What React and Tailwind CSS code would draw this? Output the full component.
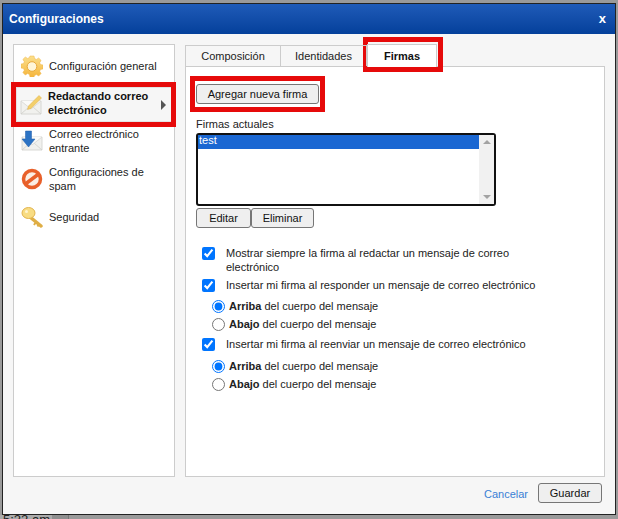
function GearIcon() {
  return (
    <svg width="22" height="22" viewBox="0 0 22 22">
      <defs>
        <linearGradient id="gear" x1="0" y1="0" x2="0" y2="1">
          <stop offset="0" stopColor="#fbe08c" />
          <stop offset="1" stopColor="#f5b53c" />
        </linearGradient>
      </defs>
      <path
        d="M9 1h4l.6 2.6 1.8.8L17.700 3l2.400 2.400-1.400 2.300.8 1.800 2.500.5v3.900l-2.500.6-.8 1.800 1.400 2.300-2.400 2.400-2.300-1.400-1.800.8L13 22H9l-.6-2.600-1.800-.8L4.300 20l-2.400-2.400 1.400-2.300-.8-1.800L0 13V9.100l2.500-.6.8-1.800-1.400-2.300L4.300 2l2.300 1.400 1.800-.8z"
        fill="url(#gear)"
        stroke="#eeb54a"
        strokeWidth="0.5"
      />
      <circle cx="11" cy="11.500" r="4.800" fill="#fff6d8" stroke="#e9a93a" strokeWidth="1" />
    </svg>
  );
}

function Envelope() {
  return (
    <>
      <path d="M1 7h20v13H1z" fill="#f1f1ee" stroke="#d0d0cc" strokeWidth="0.8" />
      <path d="M1 20l8-7M21 20l-8-7" stroke="#cfcfca" strokeWidth="0.8" fill="none" />
      <path d="M1 7l10 8 10-8" stroke="#d6d6d2" strokeWidth="0.8" fill="#fafaf8" />
    </>
  );
}

function PencilMailIcon() {
  return (
    <svg width="22" height="22" viewBox="0 0 22 22">
      <Envelope />
      <path d="M7.500 15.500l1-3.500L19 1.500l2.500 2.500L11 14.500z" fill="#f3cf6a" stroke="#dfae45" strokeWidth="0.5" />
    </svg>
  );
}

function InboxIcon() {
  return (
    <svg width="22" height="22" viewBox="0 0 22 22">
      <Envelope />
      <path d="M4.500 1h6v8h3.500l-6.500 8L1 9h3.500z" fill="#2c73c4" stroke="#1e5da8" strokeWidth="0.5" />
    </svg>
  );
}

function SpamIcon() {
  return (
    <svg width="22" height="22" viewBox="0 0 22 22">
      <circle cx="11" cy="11" r="8.500" fill="#fbeee4" stroke="#e8602a" strokeWidth="3.500" />
      <path d="M5 15.500L17 6.500" stroke="#e8602a" strokeWidth="3.500" />
    </svg>
  );
}

function KeyIcon() {
  return (
    <svg width="22" height="22" viewBox="0 0 22 22">
      <path d="M9 11l11 9" stroke="#dfae45" strokeWidth="3.500" strokeLinecap="round" />
      <path d="M15 16l-2 3M18 18l-1.500 2.500" stroke="#dfae45" strokeWidth="2" />
      <ellipse cx="7.500" cy="7" rx="6.500" ry="5.500" fill="#f8dc83" stroke="#e3b54e" strokeWidth="1" />
      <circle cx="5.500" cy="5.500" r="1.500" fill="#fff5cf" />
    </svg>
  );
}

function SideItem({ icon, height, active, children }) {
  return (
    <div
      className={
        active
          ? "mx-[2px] flex items-center border border-[#e2e2e2] bg-[#f6f6f6] pl-[2px] pr-[5px] font-bold text-[#111]"
          : "mx-[2px] flex items-center pl-[4px] pr-[5px] text-[#222]"
      }
      style={{ height }}
    >
      <span className="ml-[1px] flex w-[28px] shrink-0">{icon}</span>
      <span className={active ? "mb-[3px] w-[115px] leading-[14px]" : "w-[115px] leading-[14px]"}>{children}</span>
      {active && <span className="ml-auto h-0 w-0 border-y-[5px] border-l-[5px] border-y-transparent border-l-[#555]" />}
    </div>
  );
}

function Btn({ className, children }) {
  return (
    <button className={"h-[20px] rounded-[3px] border border-[#767676] bg-[#efefef] text-[#111] " + className}>
      {children}
    </button>
  );
}

function CheckRow({ className, children }) {
  return (
    <label className={"flex items-start pl-[16px] leading-[14px] " + className}>
      <input type="checkbox" defaultChecked className="mr-[11px] mt-[1px] h-[13px] w-[13px] shrink-0" />
      <span className="w-[330px]">{children}</span>
    </label>
  );
}

function RadioRow({ name, checked, bold, className }) {
  return (
    <label className={"flex h-[14px] items-center pl-[26px] leading-[14px] " + className}>
      <input type="radio" name={name} defaultChecked={checked} className="mr-[4px] h-[13px] w-[13px] shrink-0" />
      <span>
        <b>{bold}</b> del cuerpo del mensaje
      </span>
    </label>
  );
}

export default function App() {
  return (
    <div className="h-[519px] w-[618px] overflow-hidden bg-[#9a9a9a] pt-[3px] font-['Liberation_Sans',Arial,sans-serif] text-[11px] text-[#222] relative">
      {/* dialog */}
      <div className="ml-[2px] flex h-[512px] w-[614px] flex-col border border-[#222] bg-[#f6f6f6]">
        <div className="flex h-[30px] shrink-0 items-center justify-between bg-gradient-to-b from-[#1f5bb8] to-[#04409b] pl-[6px] pr-[9px] text-[12px] font-bold text-white">
          <span>Configuraciones</span>
          <span className="text-[13px]">x</span>
        </div>

        <div className="flex h-[443px] shrink-0 pl-[10px] pt-[10px]">
          {/* sidebar */}
          <div className="h-[433px] w-[162px] shrink-0 border border-[#ccc] bg-white">
            <SideItem icon={<GearIcon />} height={42}>Configuración general</SideItem>
            <SideItem icon={<PencilMailIcon />} height={35} active>Redactando correo electrónico</SideItem>
            <SideItem icon={<InboxIcon />} height={38}>Correo electrónico entrante</SideItem>
            <SideItem icon={<SpamIcon />} height={38}>Configuraciones de spam</SideItem>
            <SideItem icon={<KeyIcon />} height={38}>Seguridad</SideItem>
          </div>

          {/* settings panel */}
          <div className="ml-[10px] flex w-[420px] flex-col">
            <div className="relative z-10 flex h-[22px] shrink-0 items-end text-[11px]">
              <div className="flex h-[21px] w-[96px] items-center justify-center border border-b-0 border-[#ccc]">Composición</div>
              <div className="flex h-[21px] w-[86px] items-center justify-center border-y border-r border-b-0 border-[#ccc]">Identidades</div>
              <div className="-mb-px flex h-[23px] w-[70px] items-center justify-center border border-b-0 border-[#ccc] bg-white font-bold text-[#111]">Firmas</div>
            </div>
            <div className="h-[411px] border border-[#ccc] bg-white pt-[17px]">
              <Btn className="ml-[10px] w-[123px]">Agregar nueva firma</Btn>
              <div className="ml-[10px] mt-[13px] leading-[14px]">Firmas actuales</div>
              <div className="ml-[10px] mt-[2px] flex h-[73px] w-[300px] rounded-[3px] border-2 border-[#111] bg-white">
                <div className="h-[14px] flex-1 bg-[#1a67d2] pl-[1px] leading-[10px] text-white">test</div>
                <div className="flex w-[15px] flex-col items-center justify-between bg-[#f1f1f1] py-[5px]">
                  <span className="h-0 w-0 border-x-[4px] border-b-[4px] border-x-transparent border-b-[#a3a3a3]" />
                  <span className="h-0 w-0 border-x-[4px] border-t-[4px] border-x-transparent border-t-[#a3a3a3]" />
                </div>
              </div>
              <div className="ml-[10px] mt-[2px] flex">
                <Btn className="w-[55px]">Editar</Btn>
                <Btn className="w-[63px]">Eliminar</Btn>
              </div>
              <CheckRow className="mt-[18px]">Mostrar siempre la firma al redactar un mensaje de correo electrónico</CheckRow>
              <CheckRow className="mt-[4px]">Insertar mi firma al responder un mensaje de correo electrónico</CheckRow>
              <RadioRow name="responder" checked bold="Arriba" className="mt-[7px]" />
              <RadioRow name="responder" bold="Abajo" className="mt-[4px]" />
              <CheckRow className="mt-[6px]">Insertar mi firma al reenviar un mensaje de correo electrónico</CheckRow>
              <RadioRow name="reenviar" checked bold="Arriba" className="mt-[8px]" />
              <RadioRow name="reenviar" bold="Abajo" className="mt-[4px]" />
            </div>
          </div>
        </div>

        <div className="flex flex-1 items-start justify-end pr-[13px] pt-[6px]">
          <a className="mr-[10px] mt-[3px] text-[#3a7fd5]">Cancelar</a>
          <Btn className="w-[64px]">Guardar</Btn>
        </div>
      </div>

      {/* page behind the dialog */}
      <div className="flex h-[4px]">
        <div className="h-full w-[52px] bg-[#ababab] pl-[3px] text-[13px] leading-[10px] text-[#222]">5:22 am</div>
        <div className="h-full w-[17px] border-r border-[#777] bg-[#8f8f8f]" />
      </div>

      {/* red annotations drawn on the screenshot */}
      <div className="absolute left-[11px] top-[82px] h-[45px] w-[165px] border-[5px] border-[#e60a0a]" />
      <div className="absolute left-[190px] top-[76px] h-[36px] w-[135px] border-[5px] border-[#e60a0a]" />
      <div className="absolute left-[363px] top-[37px] h-[35px] w-[80px] border-[5px] border-[#e60a0a]" />
    </div>
  );
}
